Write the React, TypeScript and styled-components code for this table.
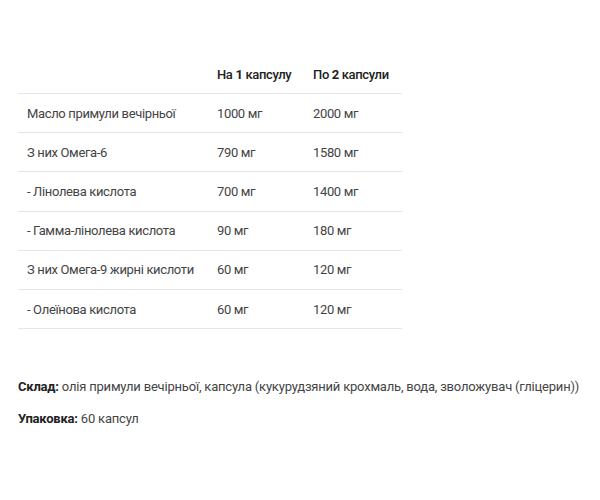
import React from "react";
import styled, { createGlobalStyle } from "styled-components";

const Global = createGlobalStyle`
  html, body { margin: 0; padding: 0; background: #fff; }
  body { font-family: Roboto, "Liberation Sans", sans-serif; color: #444; }
`;

const Page = styled.div`
  padding: 55px 18px 0 18px;
`;

const Table = styled.table`
  width: 384px;
  table-layout: fixed;
  border-collapse: collapse;
  font-size: 13px;
  letter-spacing: -0.35px;
  color: #444;
`;

const Col = styled.col<{ $w: number }>`
  width: ${(p) => p.$w}px;
`;

const HeadCell = styled.th`
  text-align: left;
  font-weight: 500;
  color: #222;
  height: 38px;
  padding: 0 9px;
  white-space: nowrap;
  border-bottom: 1px solid #e6e6e6;
`;

const Num = styled.span`
  font-weight: 700;
`;

const Cell = styled.td`
  height: 38.2px;
  padding: 0 9px;
  border-bottom: 1px solid #e6e6e6;
  white-space: nowrap;
`;

const Notes = styled.div`
  margin-top: 50px;
`;

const Info = styled.p`
  margin: 0;
  font-size: 13px;
  letter-spacing: -0.2px;
  color: #444;
  line-height: 16px;
  white-space: nowrap;
  & + & { margin-top: 16px; }
`;

const Label = styled.b`
  font-weight: 700;
  color: #222;
`;

const rows = [
  ["Масло примули вечірньої", "1000 мг", "2000 мг"],
  ["З них Омега-6", "790 мг", "1580 мг"],
  ["- Лінолева кислота", "700 мг", "1400 мг"],
  ["- Гамма-лінолева кислота", "90 мг", "180 мг"],
  ["З них Омега-9 жирні кислоти", "60 мг", "120 мг"],
  ["- Олеїнова кислота", "60 мг", "120 мг"],
];

export default function App() {
  return (
    <Page>
      <Global />
      <Table>
        <colgroup>
          <Col $w={190} />
          <Col $w={96} />
          <Col $w={98} />
        </colgroup>
        <thead>
          <tr>
            <HeadCell></HeadCell>
            <HeadCell>
              На <Num>1</Num> капсулу
            </HeadCell>
            <HeadCell>
              По <Num>2</Num> капсули
            </HeadCell>
          </tr>
        </thead>
        <tbody>
          {rows.map((r) => (
            <tr key={r[0]}>
              <Cell>{r[0]}</Cell>
              <Cell>{r[1]}</Cell>
              <Cell>{r[2]}</Cell>
            </tr>
          ))}
        </tbody>
      </Table>
      <Notes>
        <Info>
          <Label>Склад:</Label> олія примули вечірньої, капсула (кукурудзяний крохмаль, вода, зволожувач (гліцерин))
        </Info>
        <Info>
          <Label>Упаковка:</Label> 60 капсул
        </Info>
      </Notes>
    </Page>
  );
}
